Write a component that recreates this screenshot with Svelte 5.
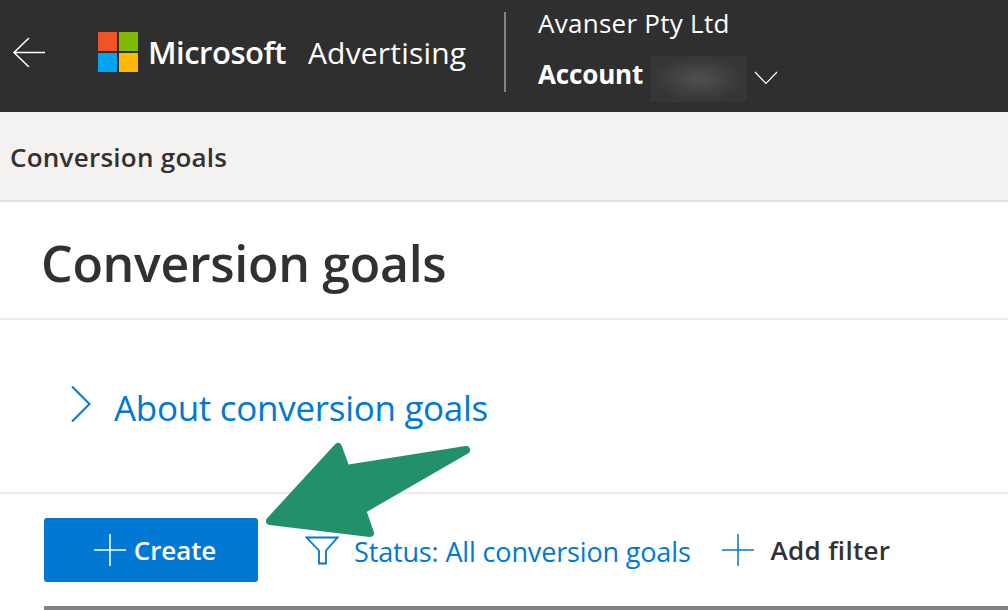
<script>
  let title = "Conversion goals";
</script>

<div class="page">
  <header class="topbar">
    <button class="back" aria-label="Back">
      <svg width="34" height="30" viewBox="0 0 34 30">
        <path d="M17 1 L2 15.500 L17 30 M2 15.500 H33" fill="none" stroke="#fff" stroke-width="1.500" />
      </svg>
    </button>
    <div class="logo">
      <svg width="40" height="40" viewBox="0 0 40 40">
        <rect width="19" height="19" fill="#f25325" />
        <rect x="21" width="19" height="19" fill="#80ba01" />
        <rect y="21" width="19" height="19" fill="#02a4ef" />
        <rect x="21" y="21" width="19" height="19" fill="#ffb902" />
      </svg>
      <span class="ms">Microsoft</span>
      <span class="adv">Advertising</span>
    </div>
    <div class="account">
      <div class="company">Avanser Pty Ltd</div>
      <div class="acct-row">
        <b>Account</b>
        <span class="redacted"></span>
        <svg class="chev" width="24" height="14" viewBox="0 0 24 14">
          <path d="M1 1 L12 12.500 L23 1" fill="none" stroke="#fff" stroke-width="1.200" />
        </svg>
      </div>
    </div>
  </header>

  <div class="crumb">{title}</div>

  <div class="heading"><h1>{title}</h1></div>

  <div class="about">
    <svg width="22" height="38" viewBox="0 0 22 38">
      <path d="M2 1.500 L19.500 19 L2 36.500" fill="none" stroke="#0078d4" stroke-width="2" />
    </svg>
    <a href="#about">About conversion goals</a>
  </div>

  <div class="toolbar">
    <button class="create">
      <svg width="32" height="32" viewBox="0 0 32 32">
        <path d="M16 0 V32 M0 16 H32" stroke="#fff" stroke-width="1.500" />
      </svg>
      <span>Create</span>
    </button>
    <div class="status">
      <svg width="34" height="29" viewBox="0 0 34 29">
        <path d="M1.500 1.500 H32.500 L21 14.500 V27.500 H14 V14.500 Z" fill="none" stroke="#0078d4" stroke-width="1.800" />
      </svg>
      <span>Status: All conversion goals</span>
    </div>
    <div class="add">
      <svg width="32" height="32" viewBox="0 0 32 32">
        <path d="M16 0 V32 M0 16 H32" stroke="#0078d4" stroke-width="1.500" />
      </svg>
      <b>Add filter</b>
    </div>
  </div>
  <div class="table-head"></div>

  <svg class="arrow" width="220" height="110" viewBox="260 435 220 110">
    <path d="M270 521 L338 447 L346 469 L466 450 L362 510 L370 533 Z"
      fill="#22906a" stroke="#22906a" stroke-width="8" stroke-linejoin="round" />
  </svg>
</div>

<style>
  :global(body) {
    background: #fff;
  }

  .page {
    position: relative;
    width: 1008px;
    height: 610px;
    overflow: hidden;
    font-family: "Open Sans", "Noto Sans", sans-serif;
    color: #323130;
  }

  .topbar {
    display: flex;
    align-items: center;
    height: 112px;
    background: #2f2f2f;
    color: #fff;
  }

  .back {
    display: flex;
    width: 98px;
    padding: 0 0 8px 12px;
    border: 0;
    background: none;
  }

  .logo {
    display: flex;
    align-items: center;
    width: 406px;
    height: 112px;
    padding-bottom: 8px;
    box-sizing: border-box;
  }

  .ms {
    margin-left: 10px;
    font-size: 31px;
    font-weight: 600;
    letter-spacing: -0.500px;
  }

  .adv {
    margin-left: 22px;
    font-size: 30px;
    letter-spacing: 0.200px;
  }

  .account {
    display: flex;
    flex-direction: column;
    gap: 6px;
    height: 80px;
    margin-bottom: 8px;
    padding-left: 32px;
    border-left: 2px solid #828282;
    font-size: 26px;
    line-height: 34px;
    letter-spacing: 0.270px;
  }

  .company {
    margin-top: -6px;
  }

  .acct-row {
    display: flex;
    align-items: center;
  }

  .acct-row b {
    font-weight: 700;
    letter-spacing: -0.150px;
  }

  .redacted {
    width: 96px;
    height: 46px;
    margin: 10px 7px 0 8px;
    background: radial-gradient(closest-side, #505050, #3a3a3a 80%, #363636);
  }

  .chev {
    margin-top: 8px;
  }

  .crumb {
    height: 90px;
    padding-left: 10px;
    background: #f3f2f1;
    font-size: 26px;
    font-weight: 600;
    line-height: 90px;
    letter-spacing: 0.250px;
    border-bottom: 2px solid #e1dfdd;
    box-sizing: border-box;
  }

  .heading {
    height: 118px;
    padding-left: 41px;
    border-bottom: 2px solid #edebe9;
    box-sizing: border-box;
  }

  h1 {
    margin: 0;
    font-size: 50px;
    font-weight: 600;
    line-height: 122px;
    letter-spacing: -0.300px;
  }

  .about {
    display: flex;
    align-items: center;
    gap: 22px;
    height: 174px;
    padding: 0 0 4px 70px;
    border-bottom: 2px solid #edebe9;
    box-sizing: border-box;
  }

  .about a {
    margin-top: 6px;
    color: #0078d4;
    font-size: 35px;
    text-decoration: none;
    letter-spacing: -0.300px;
  }

  .toolbar {
    display: flex;
    align-items: center;
    height: 112px;
    padding: 0 0 0 44px;
    box-sizing: border-box;
  }

  .create {
    display: flex;
    align-items: center;
    justify-content: center;
    gap: 8px;
    width: 214px;
    height: 64px;
    padding: 0 0 0 8px;
    border: 0;
    border-radius: 3px;
    background: #0078d4;
    color: #fff;
    font: 600 26px "Open Sans", sans-serif;
    letter-spacing: -0.100px;
  }

  .status {
    display: flex;
    align-items: center;
    gap: 15px;
    margin-left: 47px;
    color: #0078d4;
    font-size: 27px;
    letter-spacing: -0.150px;
  }

  .status span {
    margin-top: 2px;
  }

  .add {
    display: flex;
    align-items: center;
    gap: 17px;
    margin-left: 31px;
    font-size: 26px;
    letter-spacing: 0.300px;
  }

  .add b {
    font-weight: 600;
  }

  .table-head {
    height: 4px;
    margin: 0 0 0 44px;
    background: #7f8386;
  }

  .arrow {
    position: absolute;
    left: 260px;
    top: 435px;
  }
</style>
